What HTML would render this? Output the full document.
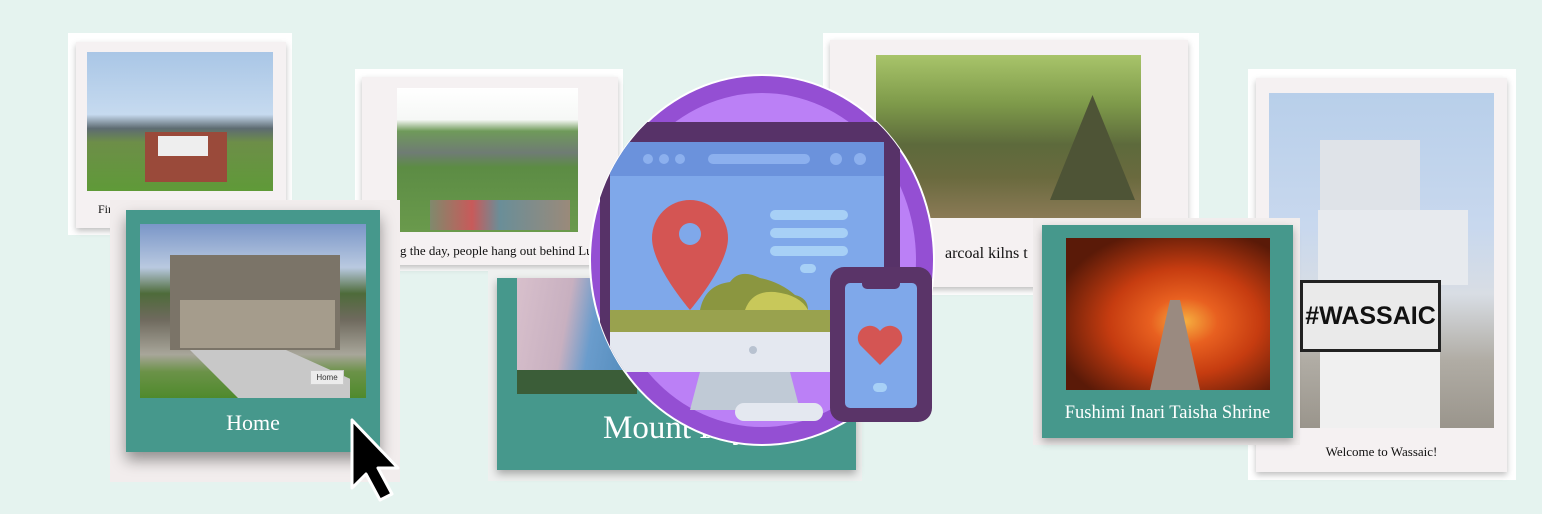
<!DOCTYPE html>
<html><head><style>
*{margin:0;padding:0;box-sizing:border-box}
body{width:1542px;height:514px;background:#e5f3ef;position:relative;overflow:hidden;font-family:"Liberation Serif",serif}
.a{position:absolute}
.sh{box-shadow:0 3px 6px rgba(0,0,0,.25)}
.t{white-space:nowrap;color:#111}
</style></head><body>

<!-- card 1 -->
<div class="a" style="left:68px;top:33px;width:224px;height:202px;background:#fff"></div>
<div class="a sh" style="left:76px;top:42px;width:210px;height:186px;background:#f5f1f2"></div>
<div class="a" style="left:87px;top:52px;width:186px;height:139px;background:linear-gradient(#a9c6e6 0,#c6daef 45%,#5d6b72 55%,#6d8e48 65%,#5f9a38 100%)"></div>
<div class="a" style="left:145px;top:132px;width:82px;height:50px;background:#9a4a3a"></div>
<div class="a" style="left:158px;top:136px;width:50px;height:20px;background:#eee"></div>
<div class="a t" style="left:98px;top:202px;font-size:12px">Fir</div>

<!-- card 2 -->
<div class="a" style="left:355px;top:69px;width:268px;height:202px;background:#fff"></div>
<div class="a sh" style="left:362px;top:77px;width:256px;height:188px;background:#f5f1f2;overflow:hidden">
<div class="a t" style="left:38px;top:166px;font-size:13px">g the day, people hang out behind Luther Ba</div>
</div>
<div class="a" style="left:397px;top:88px;width:181px;height:144px;background:linear-gradient(#fff 0,#f6f8f6 22%,#6f9a5a 30%,#6f7c74 45%,#5c8c44 55%,#6a9a4c 100%)"></div>
<div class="a" style="left:430px;top:200px;width:140px;height:30px;background:linear-gradient(90deg,#7f8a6c,#c85a5a 30%,#6a8e98 50%,#9a8a7a)" ></div>

<!-- home card -->
<div class="a" style="left:110px;top:200px;width:290px;height:282px;background:#f2eded"></div>
<div class="a" style="left:126px;top:210px;width:254px;height:242px;background:#46988c;box-shadow:0 8px 14px rgba(0,0,0,.4)"></div>
<div class="a" style="left:140px;top:224px;width:226px;height:174px;background:linear-gradient(#7a96c8 0,#b9c9e0 25%,#4e6b3a 40%,#6f6a5e 55%,#a8a69a 75%,#6b9248 85%,#4f8a2c 100%)"></div>
<div class="a" style="left:170px;top:255px;width:170px;height:95px;background:#7b7468"></div>
<div class="a" style="left:180px;top:300px;width:155px;height:48px;background:#a59c8c"></div>
<div class="a" style="left:190px;top:350px;width:160px;height:48px;background:#c8c8c8;clip-path:polygon(0 0,60% 0,100% 60%,100% 100%,30% 100%)"></div>
<div class="a" style="left:310px;top:370px;width:34px;height:15px;background:#ececec;border:1px solid #ccc;font:8px 'Liberation Sans',sans-serif;color:#333;text-align:center;line-height:13px">Home</div>
<div class="a t" style="left:126px;width:254px;top:410px;text-align:center;font-size:22px;color:#fff">Home</div>

<!-- mount fuji -->
<div class="a" style="left:488px;top:270px;width:374px;height:211px;background:#eef0ef"></div>
<div class="a" style="left:497px;top:278px;width:359px;height:192px;background:#46988c;box-shadow:0 4px 8px rgba(0,0,0,.3)"></div>
<div class="a" style="left:517px;top:278px;width:120px;height:116px;background:linear-gradient(100deg,#d8c0cc 0,#c8b0c0 40%,#6a9ccc 60%,#4e88b8 100%)"></div>
<div class="a" style="left:517px;top:370px;width:120px;height:24px;background:#3b5d38"></div>
<div class="a t" style="left:603px;top:410px;font-size:33px;color:#fff">Mount Fuj</div>

<!-- charcoal -->
<div class="a" style="left:823px;top:33px;width:376px;height:262px;background:#fff"></div>
<div class="a sh" style="left:830px;top:40px;width:358px;height:247px;background:#f5f1f2"></div>
<div class="a" style="left:876px;top:55px;width:265px;height:163px;background:linear-gradient(#a8c46a 0,#7e9a4a 30%,#5d6a3c 55%,#6a6a3e 75%,#8a7a56 100%)"></div>
<div class="a" style="left:1050px;top:95px;width:85px;height:105px;background:#4e5436;clip-path:polygon(50% 0,100% 100%,0 100%)"></div>
<div class="a t" style="left:945px;top:245px;font-size:16px">arcoal kilns t</div>

<!-- wassaic -->
<div class="a" style="left:1248px;top:69px;width:268px;height:411px;background:#fff"></div>
<div class="a sh" style="left:1256px;top:78px;width:251px;height:394px;background:#f5f1f2"></div>
<div class="a" style="left:1269px;top:93px;width:225px;height:335px;background:linear-gradient(#b8cfea 0,#c8d8ee 40%,#d8dde4 60%,#b0aca4 80%,#9a958c 100%)"></div>
<div class="a" style="left:1320px;top:140px;width:100px;height:140px;background:#dfe3e8"></div>
<div class="a" style="left:1318px;top:210px;width:150px;height:75px;background:#e7eaee"></div>
<div class="a" style="left:1320px;top:340px;width:120px;height:88px;background:#f0f0f0"></div>
<div class="a" style="left:1300px;top:280px;width:141px;height:72px;background:#eaeaea;border:3px solid #222;font:bold 25px 'Liberation Sans',sans-serif;color:#111;text-align:center;line-height:66px">#WASSAIC</div>
<div class="a t" style="left:1256px;width:251px;top:444px;text-align:center;font-size:13px">Welcome to Wassaic!</div>

<!-- fushimi -->
<div class="a" style="left:1033px;top:218px;width:267px;height:227px;background:#f1eded"></div>
<div class="a" style="left:1042px;top:225px;width:251px;height:213px;background:#46988c;box-shadow:0 4px 8px rgba(0,0,0,.3)"></div>
<div class="a" style="left:1066px;top:238px;width:204px;height:152px;background:radial-gradient(ellipse at 58% 55%,#f6b040 0,#e86020 20%,#c63c10 45%,#5a1a08 80%)"></div>
<div class="a" style="left:1150px;top:300px;width:50px;height:90px;background:#9a8a80;clip-path:polygon(40% 0,60% 0,100% 100%,0 100%)"></div>
<div class="a t" style="left:1042px;width:251px;top:403px;text-align:center;font-size:18.5px;color:#fff">Fushimi Inari Taisha Shrine</div>

<!-- icon -->
<svg class="a" style="left:0;top:0" width="1542" height="514">
<defs><clipPath id="c"><ellipse cx="762" cy="260" rx="172" ry="185"/></clipPath></defs>
<ellipse cx="762" cy="260" rx="173" ry="186" fill="#fff"/>
<ellipse cx="762" cy="260" rx="171" ry="184" fill="#944fd3"/>
<ellipse cx="762" cy="260" rx="154" ry="167" fill="#bb80f6"/>
<g clip-path="url(#c)">
<rect x="600" y="122" width="300" height="248" rx="18" fill="#573268"/>
<rect x="610" y="142" width="274" height="190" rx="10" fill="#7fa8ea"/>
<rect x="610" y="142" width="274" height="34" fill="#6b92dc"/>
<circle cx="648" cy="159" r="5" fill="#8cb0ee"/><circle cx="664" cy="159" r="5" fill="#8cb0ee"/><circle cx="680" cy="159" r="5" fill="#8cb0ee"/>
<rect x="708" y="154" width="102" height="10" rx="5" fill="#8cb0ee"/>
<circle cx="836" cy="159" r="6" fill="#8cb0ee"/><circle cx="860" cy="159" r="6" fill="#8cb0ee"/>
<rect x="770" y="210" width="78" height="10" rx="5" fill="#a7d0f6"/>
<rect x="770" y="228" width="78" height="10" rx="5" fill="#a7d0f6"/>
<rect x="770" y="246" width="78" height="10" rx="5" fill="#a7d0f6"/>
<rect x="800" y="264" width="16" height="9" rx="4.5" fill="#a7d0f6"/>
<path d="M700 310 Q705 285 730 282 Q740 268 760 278 Q780 282 795 295 Q808 298 808 310Z" fill="#8b9640"/>
<path d="M745 310 Q752 290 775 292 Q800 295 808 310Z" fill="#c8c85a"/>
<rect x="610" y="310" width="230" height="22" fill="#99a24e"/>
<rect x="610" y="332" width="230" height="40" fill="#e4e8f0"/>
<circle cx="753" cy="350" r="4" fill="#b8c2d0"/>
<path d="M700 372 L790 372 L800 410 L690 410Z" fill="#c0cad6"/>
<rect x="735" y="403" width="88" height="18" rx="9" fill="#e4e8f0"/>
<path d="M690 200 a38 38 0 0 1 38 38 c0 28 -38 72 -38 72 s-38 -44 -38 -72 a38 38 0 0 1 38 -38z" fill="#d45553"/>
<circle cx="690" cy="234" r="11" fill="#7fa8ea"/>
</g>
<rect x="830" y="267" width="102" height="155" rx="14" fill="#5a3468"/>
<rect x="845" y="283" width="72" height="125" rx="5" fill="#7fa8ea"/>
<rect x="862" y="275" width="38" height="14" rx="5" fill="#5a3468"/>
<path d="M880 365 l-20 -20 a10 10 0 0 1 20 -14 a10 10 0 0 1 20 14z" fill="#d45553"/>
<rect x="873" y="383" width="14" height="9" rx="4.5" fill="#a7d0f6"/>
<path d="M352 420 L352 488 L366 474 L380 500 L392 494 L378 468 L398 468Z" fill="#000" stroke="#fff" stroke-width="3" stroke-linejoin="round"/>
</svg>
</body></html>
